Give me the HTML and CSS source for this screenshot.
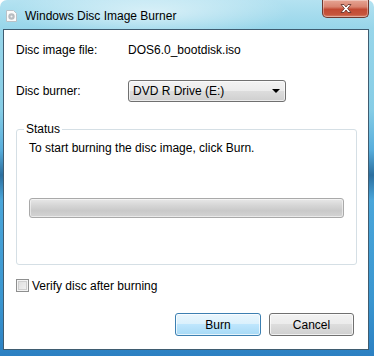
FILE: index.html
```html
<!DOCTYPE html>
<html>
<head>
<meta charset="utf-8">
<link rel="stylesheet" href="styles.css">
</head>
<body>
<div class="window">
  <div class="titlebar">
    <svg class="app-icon" width="11" height="12" viewBox="0 0 11 12">
      <path d="M0.5 0.5 H7.5 L10.5 3.5 V11.5 H0.5 Z" fill="#fbfbfb" stroke="#b9c2c8"/>
      <circle cx="5.5" cy="6.5" r="3.2" fill="#b8bcc0"/>
      <circle cx="5.5" cy="6.5" r="1" fill="#f4f4f4"/>
    </svg>
    <span class="title">Windows Disc Image Burner</span>
    <div class="close">
      <svg width="16" height="11" viewBox="0 0 16 11">
        <path d="M3 1.5 H6 L8 4 L10 1.5 H13 L9.6 5.5 L13 9.5 H10 L8 7 L6 9.5 H3 L6.4 5.5 Z" fill="#ffffff" stroke="#5a2a22" stroke-width="0.8" stroke-linejoin="round"/>
      </svg>
    </div>
  </div>
  <div class="client">
    <div class="row row-file">
      <span class="label">Disc image file:</span>
      <span class="value">DOS6.0_bootdisk.iso</span>
    </div>
    <div class="row row-burner">
      <span class="label">Disc burner:</span>
      <div class="select">
        <span>DVD R Drive (E:)</span>
        <span class="arrow"></span>
      </div>
    </div>
    <div class="group">
      <span class="group-title">Status</span>
      <div class="status-text">To start burning the disc image, click Burn.</div>
      <div class="progress"></div>
    </div>
    <label class="check-row">
      <span class="checkbox"></span>
      <span>Verify disc after burning</span>
    </label>
    <div class="buttons">
      <button class="btn btn-default">Burn</button>
      <button class="btn">Cancel</button>
    </div>
  </div>
</div>
</body>
</html>
```
FILE: styles.css
```css
html, body {
  margin: 0;
  padding: 0;
  background: #ffffff;
}
body {
  font-family: "Liberation Sans", Arial, sans-serif;
  font-size: 12px;
  color: #000;
}
.window {
  width: 374px;
  height: 356px;
  box-sizing: border-box;
  border-radius: 7px 7px 0 0;
  display: flex;
  flex-direction: column;
  background:
    radial-gradient(ellipse 140px 26px at 150px 12px, rgba(255,255,255,0.55), rgba(255,255,255,0) 100%),
    linear-gradient(to bottom, #b4e2f1 0px, #98d6ea 28px, #86cde6 110px, #58aedc 150px, #2c6f9f 175px, #4aa6da 200px, #3a96d0 300px, #2c80c2 356px);
}
.titlebar {
  height: 29px;
  display: flex;
  align-items: flex-start;
  flex: none;
}
.app-icon {
  margin: 10px 0 0 6px;
  flex: none;
}
.title {
  margin: 9px 0 0 8px;
  font-size: 12px;
  line-height: 15px;
  color: #000;
}
.close {
  margin-left: auto;
  margin-right: 5px;
  width: 47px;
  height: 18px;
  box-sizing: border-box;
  border: 1px solid #6e3a30;
  border-top: none;
  border-radius: 0 0 5px 5px;
  background: linear-gradient(to bottom, #e6a594 0%, #d98470 40%, #c24a33 55%, #c6553c 85%, #d8866e 100%);
  display: flex;
  align-items: center;
  justify-content: center;
  box-shadow: inset 0 0 0 1px rgba(255,255,255,0.35);
}
.client {
  margin-left: 3px;
  width: 366px;
  height: 321px;
  box-sizing: border-box;
  border: 1px solid #3f5c70;
  background: #ffffff;
  padding: 0 14px 0 12px;
  display: flex;
  flex-direction: column;
}
.row {
  display: flex;
  align-items: center;
}
.row-file {
  margin-top: 12px;
  height: 15px;
}
.label {
  width: 112px;
  flex: none;
}
.row-burner {
  margin-top: 23px;
  height: 22px;
}
.select {
  width: 158px;
  height: 22px;
  box-sizing: border-box;
  border: 1px solid #707070;
  border-radius: 3px;
  background: linear-gradient(to bottom, #f3f3f3 0%, #ebebeb 50%, #dddddd 50%, #cfcfcf 100%);
  display: flex;
  align-items: center;
  padding: 0 0 0 4px;
  box-shadow: inset 0 0 0 1px rgba(255,255,255,0.6);
}
.arrow {
  margin-left: auto;
  margin-right: 5px;
  width: 0;
  height: 0;
  border-left: 4px solid transparent;
  border-right: 4px solid transparent;
  border-top: 4px solid #000;
}
.group {
  position: relative;
  margin-top: 27px;
  margin-right: -3px;
  height: 136px;
  box-sizing: border-box;
  border: 1px solid #d5dfe5;
  border-radius: 3px;
  padding: 11px 12px 0 12px;
}
.group-title {
  position: absolute;
  top: -8px;
  left: 7px;
  padding: 0 2px;
  background: #fff;
  line-height: 15px;
}
.status-text {
  line-height: 15px;
}
.progress {
  margin-top: 42px;
  height: 20px;
  box-sizing: border-box;
  border: 1px solid #a9a9a9;
  border-radius: 3px;
  background: linear-gradient(to bottom, #e8e8e8 0%, #d6d6d6 35%, #c9c9c9 65%, #d4d4d4 100%);
  box-shadow: inset 0 0 0 1px rgba(255,255,255,0.5);
}
.check-row {
  margin-top: 14px;
  display: flex;
  align-items: center;
  height: 13px;
}
.checkbox {
  width: 13px;
  height: 13px;
  box-sizing: border-box;
  border: 1px solid #8e8f8f;
  margin-right: 3px;
  background: linear-gradient(135deg, #dcdcdc 0%, #f4f4f4 100%);
  box-shadow: inset 0 0 0 1px #f4f4f4, inset 0 0 0 2px #cfcfcf;
}
.buttons {
  margin-top: 21px;
  display: flex;
  justify-content: flex-end;
  gap: 8px;
}
.btn {
  font-family: "Liberation Sans", Arial, sans-serif;
  font-size: 12px;
  width: 85px;
  height: 23px;
  padding: 0;
  border: 1px solid #707070;
  border-radius: 3px;
  background: linear-gradient(to bottom, #f2f2f2 0%, #ebebeb 50%, #dddddd 50%, #cfcfcf 100%);
  box-shadow: inset 0 0 0 1px rgba(255,255,255,0.7);
  color: #000;
}
.btn-default {
  width: 86px;
  border-color: #3c7fb1;
  background: linear-gradient(to bottom, #eaf6fd 0%, #d9f0fc 50%, #bee6fd 50%, #a7d9f5 100%);
}
```
